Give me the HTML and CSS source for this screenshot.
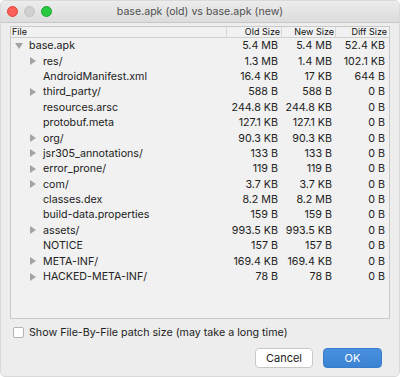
FILE: index.html
```html
<!DOCTYPE html>
<html>
<head>
<meta charset="utf-8">
<link rel="stylesheet" href="styles.css">
</head>
<body>
<div class="window">
  <div class="titlebar">
    <div class="lights">
      <span class="light red"></span>
      <span class="light gray"></span>
      <span class="light green"></span>
    </div>
    <div class="title">base.apk (old) vs base.apk (new)</div>
  </div>
  <div class="content">
    <div class="panel">
      <div class="row head">
        <div class="cell name">File</div>
        <div class="cell num">Old Size</div>
        <div class="cell num">New Size</div>
        <div class="cell num last">Diff Size</div>
      </div>
      <div class="row"><div class="cell name l0"><span class="tri down"></span>base.apk</div><div class="cell num">5.4 MB</div><div class="cell num">5.4 MB</div><div class="cell num last">52.4 KB</div></div>
      <div class="row"><div class="cell name l1"><span class="tri right"></span>res/</div><div class="cell num">1.3 MB</div><div class="cell num">1.4 MB</div><div class="cell num last">102.1 KB</div></div>
      <div class="row"><div class="cell name l1"><span class="tri none"></span>AndroidManifest.xml</div><div class="cell num">16.4 KB</div><div class="cell num">17 KB</div><div class="cell num last">644 B</div></div>
      <div class="row"><div class="cell name l1"><span class="tri right"></span>third_party/</div><div class="cell num">588 B</div><div class="cell num">588 B</div><div class="cell num last">0 B</div></div>
      <div class="row"><div class="cell name l1"><span class="tri none"></span>resources.arsc</div><div class="cell num">244.8 KB</div><div class="cell num">244.8 KB</div><div class="cell num last">0 B</div></div>
      <div class="row"><div class="cell name l1"><span class="tri none"></span>protobuf.meta</div><div class="cell num">127.1 KB</div><div class="cell num">127.1 KB</div><div class="cell num last">0 B</div></div>
      <div class="row"><div class="cell name l1"><span class="tri right"></span>org/</div><div class="cell num">90.3 KB</div><div class="cell num">90.3 KB</div><div class="cell num last">0 B</div></div>
      <div class="row"><div class="cell name l1"><span class="tri right"></span>jsr305_annotations/</div><div class="cell num">133 B</div><div class="cell num">133 B</div><div class="cell num last">0 B</div></div>
      <div class="row"><div class="cell name l1"><span class="tri right"></span>error_prone/</div><div class="cell num">119 B</div><div class="cell num">119 B</div><div class="cell num last">0 B</div></div>
      <div class="row"><div class="cell name l1"><span class="tri right"></span>com/</div><div class="cell num">3.7 KB</div><div class="cell num">3.7 KB</div><div class="cell num last">0 B</div></div>
      <div class="row"><div class="cell name l1"><span class="tri none"></span>classes.dex</div><div class="cell num">8.2 MB</div><div class="cell num">8.2 MB</div><div class="cell num last">0 B</div></div>
      <div class="row"><div class="cell name l1"><span class="tri none"></span>build-data.properties</div><div class="cell num">159 B</div><div class="cell num">159 B</div><div class="cell num last">0 B</div></div>
      <div class="row"><div class="cell name l1"><span class="tri right"></span>assets/</div><div class="cell num">993.5 KB</div><div class="cell num">993.5 KB</div><div class="cell num last">0 B</div></div>
      <div class="row"><div class="cell name l1"><span class="tri none"></span>NOTICE</div><div class="cell num">157 B</div><div class="cell num">157 B</div><div class="cell num last">0 B</div></div>
      <div class="row"><div class="cell name l1"><span class="tri right"></span>META-INF/</div><div class="cell num">169.4 KB</div><div class="cell num">169.4 KB</div><div class="cell num last">0 B</div></div>
      <div class="row"><div class="cell name l1"><span class="tri right"></span>HACKED-META-INF/</div><div class="cell num">78 B</div><div class="cell num">78 B</div><div class="cell num last">0 B</div></div>
    </div>
    <label class="check">
      <span class="box"></span>
      <span>Show File-By-File patch size (may take a long time)</span>
    </label>
    <div class="buttons">
      <button class="btn cancel">Cancel</button>
      <button class="btn ok">OK</button>
    </div>
  </div>
</div>
</body>
</html>
```

FILE: styles.css
```css
html, body {
  margin: 0;
  padding: 0;
  background: #ffffff;
}
body {
  font-family: Inter, "Liberation Sans", sans-serif;
  color: #1e1e1e;
}
.window {
  width: 400px;
  height: 377px;
  box-sizing: border-box;
  background: #ededed;
  border-radius: 5px;
  border: 1px solid #dadada;
  overflow: hidden;
  display: flex;
  flex-direction: column;
}
.titlebar {
  height: 21px;
  flex: none;
  background: linear-gradient(#ececec, #dcdcdc);
  border-bottom: 1px solid #c8c8c8;
  display: flex;
  align-items: center;
  position: relative;
}
.lights {
  display: flex;
  gap: 6px;
  padding-left: 6px;
  position: relative;
  z-index: 1;
}
.light {
  width: 11px;
  height: 11px;
  border-radius: 50%;
  box-sizing: border-box;
}
.red { background: #fc5f57; border: 0.5px solid #e0443e; }
.gray { background: #d0d0d0; border: 0.5px solid #c2c2c2; }
.green { background: #29c940; border: 0.5px solid #1ea731; }
.title {
  position: absolute;
  left: 0;
  right: 0;
  top: 0;
  line-height: 21px;
  text-align: center;
  font-size: 10.6px;
  font-weight: 400;
  color: #505050;
}
.content {
  flex: 1;
  display: flex;
  flex-direction: column;
  padding: 3px 9px 0 9px;
}
.panel {
  height: 293px;
  border: 1px solid #c9c9c9;
  background: #f1f1f1;
  box-sizing: border-box;
}
.row {
  display: grid;
  grid-template-columns: 216px 55px 54px 51px;
  height: 15.4px;
  align-items: center;
  font-size: 10.7px;
  color: #222;
}
.row.head {
  height: 10px;
  font-size: 9px;
  color: #111;
  border-bottom: 1px solid #d0d0d0;
}
.row.head .cell {
  border-right: 1px solid #d8d8d8;
  padding-right: 1px;
  line-height: 10px;
}
.row.head .cell.last {
  border-right: none;
  padding-right: 0;
}
.row.head .cell.name {
  padding-left: 1px;
}
.cell {
  white-space: nowrap;
  overflow: hidden;
}
.num {
  text-align: right;
  padding-right: 4px;
}
.num.last {
  padding-right: 2px;
}
.name {
  display: flex;
  align-items: center;
}
.l0 { padding-left: 4px; }
.l1 { padding-left: 18px; }
.tri {
  width: 14px;
  height: 8px;
  flex: none;
  position: relative;
}
.tri.right::before {
  content: "";
  position: absolute;
  left: 1px;
  top: 0;
  border-top: 4px solid transparent;
  border-bottom: 4px solid transparent;
  border-left: 6px solid #a3a3a3;
}
.tri.down::before {
  content: "";
  position: absolute;
  left: 0;
  top: 1px;
  border-left: 4px solid transparent;
  border-right: 4px solid transparent;
  border-top: 6px solid #a3a3a3;
}
.check {
  display: flex;
  align-items: center;
  gap: 5px;
  margin-top: 7px;
  padding-left: 3px;
  font-size: 10.7px;
  color: #222;
  height: 12px;
}
.box {
  width: 11px;
  height: 11px;
  box-sizing: border-box;
  border: 1px solid #b4b4b4;
  border-radius: 2px;
  background: #ffffff;
}
.buttons {
  display: flex;
  justify-content: flex-end;
  gap: 10px;
  margin-top: 10px;
  padding-right: 8px;
}
.btn {
  font-family: Inter, "Liberation Sans", sans-serif;
  font-size: 11px;
  height: 20px;
  border-radius: 4px;
  padding: 0;
  box-sizing: border-box;
}
.cancel {
  width: 58px;
  background: #ffffff;
  border: 1px solid #c8c8c8;
  color: #222;
}
.ok {
  width: 59px;
  background: linear-gradient(#4a90e0, #3a82d2);
  border: 1px solid #3a7cc8;
  color: #ffffff;
}
```
